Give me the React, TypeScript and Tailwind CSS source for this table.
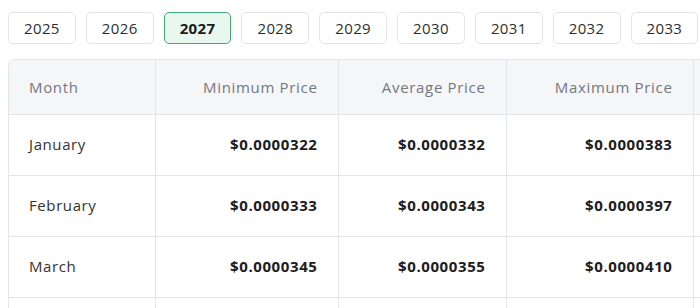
import React, { useState } from 'react';

interface Row {
    month: string;
    min: string;
    avg: string;
    max: string;
    change: string;
}

const years = [2025, 2026, 2027, 2028, 2029, 2030, 2031, 2032, 2033, 2034, 2035];

const rows: Row[] = [
    { month: "January", min: "$0.0000322", avg: "$0.0000332", max: "$0.0000383", change: "+12.4%" },
    { month: "February", min: "$0.0000333", avg: "$0.0000343", max: "$0.0000397", change: "+16.5%" },
    { month: "March", min: "$0.0000345", avg: "$0.0000355", max: "$0.0000410", change: "+20.3%" },
    { month: "April", min: "$0.0000357", avg: "$0.0000367", max: "$0.0000424", change: "+24.4%" },
];

function YearTabs({ active, setActive }: { active: number; setActive: (y: number) => void }) {
    return (
        <div className="flex gap-[10px] pl-2 pt-3">
            {years.map((year) => {
                const selected = year === active;
                return (
                    <button
                        key={year}
                        onClick={() => setActive(year)}
                        className={`shrink-0 h-8 px-[15px] rounded-[5px] border text-[15px] leading-[22px] tracking-[0.025em] ${
                            selected
                                ? 'bg-[#e9f8ef] border-[#43a877] text-[#1b1b1b] font-bold'
                                : 'bg-white border-[#e2e4e7] text-[#2e2e2e]'
                        }`}
                    >
                        {year}
                    </button>
                );
            })}
        </div>
    );
}

function App() {
    const [active, setActive] = useState<number>(2027);

    return (
        <div className="w-[700px] h-[308px] overflow-hidden bg-white font-['Open_Sans',sans-serif]">
            <div className="w-max">
                <YearTabs active={active} setActive={setActive} />
                <div className="ml-2 mt-[15px] border-t border-l border-[#e3e5e9] rounded-tl-md overflow-hidden w-max">
                    <table className="table-fixed border-collapse text-[15px]">
                        <colgroup>
                            <col className="w-[146px]" />
                            <col className="w-[183px]" />
                            <col className="w-[168px]" />
                            <col className="w-[187px]" />
                            <col className="w-[180px]" />
                        </colgroup>
                        <thead>
                            <tr className="bg-[#f5f6f8] text-[#74787f] h-[54px] tracking-[0.045em]">
                                <th className="font-normal text-left pl-5 border-r border-b border-[#e3e5e9]">Month</th>
                                <th className="font-normal text-right pr-5 border-r border-b border-[#e3e5e9]">Minimum Price</th>
                                <th className="font-normal text-right pr-5 border-r border-b border-[#e3e5e9]">Average Price</th>
                                <th className="font-normal text-right pr-5 border-r border-b border-[#e3e5e9]">Maximum Price</th>
                                <th className="font-normal text-right pr-5 border-r border-b border-[#e3e5e9]">Change</th>
                            </tr>
                        </thead>
                        <tbody>
                            {rows.map((row) => (
                                <tr key={row.month} className="h-[61px]">
                                    <td className="pl-5 text-[#333] tracking-[0.04em] border-r border-b border-[#e3e5e9]">{row.month}</td>
                                    <td className="pr-5 text-right font-bold tracking-[0.04em] text-[#1c1c1e] border-r border-b border-[#e3e5e9]">{row.min}</td>
                                    <td className="pr-5 text-right font-bold tracking-[0.04em] text-[#1c1c1e] border-r border-b border-[#e3e5e9]">{row.avg}</td>
                                    <td className="pr-5 text-right font-bold tracking-[0.04em] text-[#1c1c1e] border-r border-b border-[#e3e5e9]">{row.max}</td>
                                    <td className="pr-5 text-right font-bold tracking-[0.04em] text-[#1c1c1e] border-r border-b border-[#e3e5e9]">{row.change}</td>
                                </tr>
                            ))}
                        </tbody>
                    </table>
                </div>
            </div>
        </div>
    );
}

export default App;
